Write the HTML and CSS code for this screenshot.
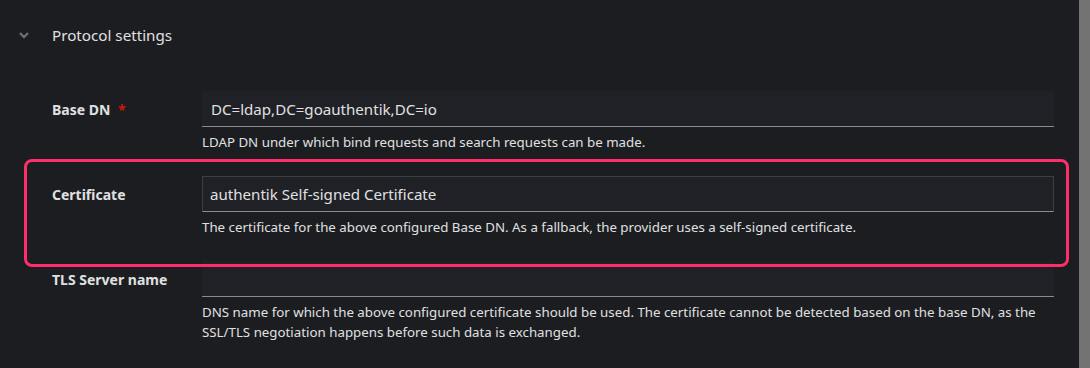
FILE: index.html
```html
<!DOCTYPE html>
<html lang="en">
<head>
    <meta charset="UTF-8">
    <meta name="viewport" content="width=device-width, initial-scale=1.0">
    <title>Protocol settings</title>
    <link rel="stylesheet" href="styles.css">
</head>
<body>
    <div class="page">
        <div class="content">
            <div class="section-header">
                <svg class="chevron" width="10" height="7" viewBox="0 0 10 7">
                    <path d="M1 1 L5 5 L9 1" fill="none" stroke="#6a6e73" stroke-width="2.4"/>
                </svg>
                <span class="section-title">Protocol settings</span>
            </div>

            <div class="form">
                <div class="form-group">
                    <label class="form-label">Base DN <span class="required">*</span></label>
                    <div class="form-control">
                        <input type="text" class="text-input" value="DC=ldap,DC=goauthentik,DC=io">
                        <p class="helper-text">LDAP DN under which bind requests and search requests can be made.</p>
                    </div>
                </div>

                <div class="form-group highlighted">
                    <label class="form-label">Certificate</label>
                    <div class="form-control">
                        <div class="select-input">authentik Self-signed Certificate</div>
                        <p class="helper-text">The certificate for the above configured Base DN. As a fallback, the provider uses a self-signed certificate.</p>
                    </div>
                </div>

                <div class="form-group">
                    <label class="form-label">TLS Server name</label>
                    <div class="form-control">
                        <input type="text" class="text-input" value="">
                        <p class="helper-text">DNS name for which the above configured certificate should be used. The certificate cannot be detected based on the base DN, as the SSL/TLS negotiation happens before such data is exchanged.</p>
                    </div>
                </div>
            </div>
        </div>
        <div class="scrollbar"></div>
    </div>
</body>
</html>
```

FILE: styles.css
```css
body {
    margin: 0;
    background-color: #1b1d21;
    color: #e0e0e0;
    font-family: "Noto Sans", "Open Sans", sans-serif;
    overflow: hidden;
}

.page {
    display: flex;
    height: 368px;
}

.content {
    flex: 1;
    padding: 0 25px 0 19px;
}

.scrollbar {
    width: 11px;
    background-color: #737373;
}

/* Section header */
.section-header {
    display: flex;
    align-items: center;
    height: 70px;
}

.chevron {
    width: 10px;
    margin-right: 23px;
}

.section-title {
    font-size: 15.2px;
    color: #e0e0e0;
}

/* Form rows */
.form {
    padding-top: 21px;
    padding-left: 33px;
}

.form-group {
    display: grid;
    grid-template-columns: 150px 1fr;
    margin-bottom: 24px;
}

.form-label {
    font-size: 14px;
    font-weight: bold;
    color: #e0e0e0;
    padding-top: 9px;
}

.required {
    color: #c9190b;
    margin-left: 4px;
}

.text-input {
    display: block;
    box-sizing: border-box;
    width: 100%;
    height: 36px;
    margin: 0;
    padding: 0 9px;
    background-color: #1f2126;
    border: none;
    border-bottom: 1px solid #8a8d90;
    color: #e0e0e0;
    font-family: inherit;
    font-size: 15.1px;
    outline: none;
}

.select-input {
    box-sizing: border-box;
    height: 36px;
    padding: 0 7px;
    line-height: 34px;
    background-color: #1f2126;
    border: 1px solid #3c3f42;
    border-bottom-color: #8a8d90;
    font-size: 15.1px;
}

.helper-text {
    margin: 5px 0 0;
    font-size: 13.3px;
    line-height: 20px;
    color: #e0e0e0;
}

/* Annotation box */
.highlighted {
    position: relative;
}

.highlighted::after {
    content: "";
    position: absolute;
    top: -17px;
    left: -28px;
    right: -15px;
    bottom: -30px;
    border: 3px solid #ff2e6a;
    border-radius: 8px;
}
```
